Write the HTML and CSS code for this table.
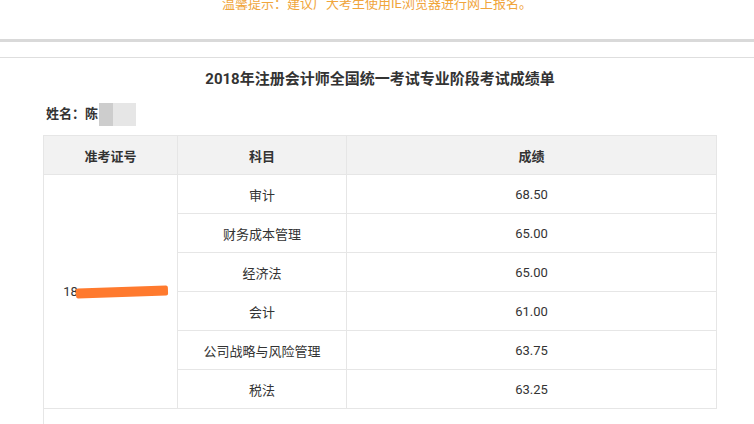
FILE: index.html
```html
<!DOCTYPE html>
<html lang="zh-CN">
<head>
<meta charset="utf-8">
<link rel="stylesheet" href="styles.css">
</head>
<body>
<div class="banner"><span class="tip">温馨提示：建议广大考生使用IE浏览器进行网上报名。</span></div>
<div class="rule-thick"></div>
<div class="rule-thin"></div>
<main class="content">
  <h1 class="title">2018年注册会计师全国统一考试专业阶段考试成绩单</h1>
  <div class="name">姓名：陈<span class="mask"><span class="mask-dark"></span><span class="mask-light"></span></span></div>
  <table class="scores">
    <thead>
      <tr><th class="c1">准考证号</th><th class="c2">科目</th><th class="c3">成绩</th></tr>
    </thead>
    <tbody>
      <tr><td class="id" rowspan="6"><span class="idnum">18<span class="scribble"></span></span></td><td>审计</td><td>68.50</td></tr>
      <tr><td>财务成本管理</td><td>65.00</td></tr>
      <tr><td>经济法</td><td>65.00</td></tr>
      <tr><td>会计</td><td>61.00</td></tr>
      <tr><td>公司战略与风险管理</td><td>63.75</td></tr>
      <tr><td>税法</td><td>63.25</td></tr>
      <tr class="last"><td colspan="3"></td></tr>
    </tbody>
  </table>
</main>
</body>
</html>
```
FILE: styles.css
```css
html, body {
  margin: 0;
  padding: 0;
  background: #ffffff;
}
body {
  font-family: Roboto, "Noto Sans CJK SC", sans-serif;
  color: #333333;
  overflow: hidden;
  height: 424px;
}
.banner {
  height: 39px;
  text-align: center;
  overflow: hidden;
}
.tip {
  display: block;
  font-size: 13px;
  line-height: 14px;
  margin-top: -3px;
  color: #f0a53c;
}
.rule-thick {
  height: 3px;
  background: #d9d9d9;
}
.rule-thin {
  height: 1px;
  margin-top: 15px;
  background: #dedede;
}
.content {
  padding: 0 37px 0 43px;
}
.title {
  margin: 12px 0 0;
  height: 18px;
  line-height: 18px;
  text-align: center;
  font-size: 15px;
  font-weight: bold;
  color: #333333;
}
.name {
  margin-top: 14px;
  height: 24px;
  line-height: 24px;
  font-size: 13px;
  font-weight: bold;
  padding-left: 3px;
  display: flex;
  align-items: center;
}
.mask {
  display: inline-flex;
  height: 23px;
  margin-left: 1px;
}
.mask-dark {
  width: 14px;
  background: #cdcdcd;
}
.mask-light {
  width: 23px;
  background: #e6e6e6;
}
.scores {
  margin-top: 9px;
  width: 674px;
  border-collapse: collapse;
  table-layout: fixed;
  font-size: 13px;
}
.scores th, .scores td {
  border: 1px solid #e6e6e6;
  text-align: center;
  height: 38px;
  padding: 0;
}
.scores th {
  background: #f2f2f2;
  font-weight: bold;
  color: #333333;
}
.c1 { width: 133px; }
.c2 { width: 168px; }
.c3 { width: 369px; }
.scores tr.last td {
  height: 30px;
  border-bottom: none;
  border-right: none;
}
.idnum {
  display: inline-flex;
  align-items: center;
  margin-left: 10px;
}
.scribble {
  display: inline-block;
  width: 92px;
  height: 10px;
  margin-left: -2px;
  background: #ff7a2e;
  transform: rotate(-2deg);
  border-radius: 2px;
}
```
